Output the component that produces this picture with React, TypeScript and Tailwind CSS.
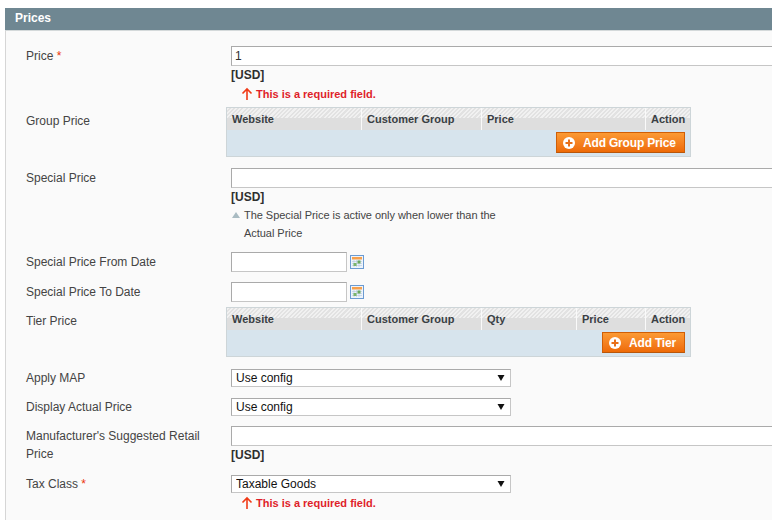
function RequiredError() {
  return (
    <div className="flex h-5 items-center pl-[10px] text-[11px] font-bold text-[#df1f2a]">
      <svg width="12" height="14" viewBox="0 0 12 14" className="mr-[3px]">
        <path d="M6 13V2M1.5 6.5 6 2l4.5 4.5" fill="none" stroke="#f03a17" strokeWidth="1.6" />
      </svg>
      This is a required field.
    </div>
  );
}

function Usd() {
  return <div className="h-[18px] text-[12px] leading-[18px] font-bold text-[#2f2f2f]">[USD]</div>;
}

function CalendarIcon() {
  return (
    <svg width="14" height="14" viewBox="0 0 14 14" className="ml-[3px]">
      <rect x="0.5" y="0.5" width="13" height="13" fill="#eef4fb" stroke="#6b9bd2" />
      <rect x="2" y="2" width="10" height="2.5" fill="#f6a04d" />
      <path d="M2 6.5h10M2 8.5h10M2 10.5h10M4 5v7M6.5 5v7M9 5v7" stroke="#b5c8de" strokeWidth="0.6" />
      <rect x="3.5" y="8" width="3" height="3" fill="#7cb56a" />
      <rect x="7.5" y="5.5" width="3" height="3" fill="#6aa85c" />
    </svg>
  );
}

function PlusCircle() {
  return (
    <svg width="12" height="12" viewBox="0 0 12 12" className="shrink-0">
      <circle cx="6" cy="6" r="6" fill="#fff" />
      <path d="M6 2.5v7M2.5 6h7" stroke="#e8701a" strokeWidth="2" />
    </svg>
  );
}

function TextInput({ value, className }: { value?: string; className: string }) {
  return (
    <input
      readOnly
      value={value ?? ""}
      className={`block h-5 border border-[#aaa] border-b-[#c6c6c6] border-r-[#c6c6c6] bg-white px-[3px] text-[12px] text-[#2f2f2f] outline-none ${className}`}
    />
  );
}

function SelectBox({ value }: { value: string }) {
  return (
    <div className="relative h-[18px] w-[280px]">
      <select className="block h-[18px] w-full appearance-none border border-[#aaa] border-b-[#c6c6c6] border-r-[#c6c6c6] bg-white pl-1 text-[12px] leading-[16px] text-[#111] outline-none">
        <option>{value}</option>
      </select>
      <svg width="8" height="6" viewBox="0 0 8 6" className="pointer-events-none absolute right-[6px] top-[6px]">
        <path d="M0.5 0h7L4 6z" fill="#111" />
      </svg>
    </div>
  );
}

function Label({
  children,
  required,
  compact,
}: {
  children: React.ReactNode;
  required?: boolean;
  compact?: boolean;
}) {
  return (
    <div className={`pr-5 text-[12px] leading-[18px] text-[#444] ${compact ? "" : "pt-px"}`}>
      {children}
      {required && <span className="text-[#eb340a]"> *</span>}
    </div>
  );
}

function PriceTable({
  columns,
  widths,
  button,
  buttonClass,
}: {
  columns: string[];
  widths: string;
  button: string;
  buttonClass: string;
}) {
  return (
    <div className="ml-[-5px] h-[50px] w-[465px] border border-[#cdd5d8] bg-[#d7e4ed]">
      <div className={`grid h-[22px] border-b border-[#aeb6b9] ${widths}`}>
        {columns.map((col) => (
          <div
            key={col}
            className="border-r border-[#fafafa] bg-[#dedede] bg-[repeating-linear-gradient(135deg,#f1f1f1_0px,#f1f1f1_1.5px,#e2e2e2_1.5px,#e2e2e2_3px)] bg-[length:100%_10px] bg-no-repeat pl-[5px] text-[11px] leading-[22px] font-bold text-[#3a3f44] last:border-r-0"
          >
            {col}
          </div>
        ))}
      </div>
      <div className="flex justify-end pt-[2px] pr-[5px]">
        <button
          className={`flex h-[21px] items-center border border-[#cf5f08] border-b-[#b9560a] bg-gradient-to-b from-[#fb9a34] to-[#ee6a05] pl-[6px] text-[12px] font-bold tracking-[-0.18px] text-white ${buttonClass}`}
        >
          <PlusCircle />
          <span className="ml-[8px]">{button}</span>
        </button>
      </div>
    </div>
  );
}

export default function App() {
  return (
    <div className="h-[520px] w-[772px] overflow-hidden bg-white pt-2 pl-[5px] font-['Liberation_Sans',Arial,sans-serif]">
      <div className="h-[23px] border-b border-[#d4d9da] bg-[#6f8792] pl-[10px] text-[12px] leading-[21px] font-bold text-white">
        Prices
      </div>
      <div className="h-[489px] border-l border-[#d6d6d6] bg-[#fafafa] pt-[15px] pl-5">
        <div className="grid grid-cols-[205px_1fr]">
          <Label required>Price</Label>
          <div>
            <TextInput value="1" className="w-[560px]" />
            <Usd />
            <RequiredError />
          </div>
        </div>

        <div className="mt-[3px] grid grid-cols-[205px_1fr]">
          <div className="pt-[4px]">
            <Label>Group Price</Label>
          </div>
          <PriceTable
            columns={["Website", "Customer Group", "Price", "Action"]}
            widths="grid-cols-[135px_120px_164px_44px]"
            button="Add Group Price"
            buttonClass="w-[129px]"
          />
        </div>

        <div className="mt-[11px] grid grid-cols-[205px_1fr]">
          <Label>Special Price</Label>
          <div>
            <TextInput className="w-[560px]" />
            <Usd />
            <div className="relative w-[280px] pl-[13px] text-[11px] leading-[18px] tracking-[-0.04px] text-[#444]">
              <svg width="8" height="6" viewBox="0 0 8 6" className="absolute left-px top-[6px]">
                <path d="M4 0l4 6H0z" fill="#a9bbc2" />
              </svg>
              The Special Price is active only when lower than the Actual Price
            </div>
          </div>
        </div>

        <div className="mt-[10px] grid grid-cols-[205px_1fr]">
          <Label>Special Price From Date</Label>
          <div className="flex items-center">
            <TextInput className="w-[116px]" />
            <CalendarIcon />
          </div>
        </div>

        <div className="mt-[10px] grid grid-cols-[205px_1fr]">
          <Label>Special Price To Date</Label>
          <div className="flex items-center">
            <TextInput className="w-[116px]" />
            <CalendarIcon />
          </div>
        </div>

        <div className="mt-[5px] grid grid-cols-[205px_1fr]">
          <div className="pt-[4px]">
            <Label>Tier Price</Label>
          </div>
          <PriceTable
            columns={["Website", "Customer Group", "Qty", "Price", "Action"]}
            widths="grid-cols-[135px_120px_95px_69px_44px]"
            button="Add Tier"
            buttonClass="w-[83px]"
          />
        </div>

        <div className="mt-3 grid grid-cols-[205px_1fr]">
          <Label compact>Apply MAP</Label>
          <SelectBox value="Use config" />
        </div>

        <div className="mt-[11px] grid grid-cols-[205px_1fr]">
          <Label compact>Display Actual Price</Label>
          <SelectBox value="Use config" />
        </div>

        <div className="mt-[10px] grid grid-cols-[205px_1fr]">
          <Label>Manufacturer's Suggested Retail Price</Label>
          <div>
            <TextInput className="w-[560px]" />
            <Usd />
          </div>
        </div>

        <div className="mt-[11px] grid grid-cols-[205px_1fr]">
          <Label required compact>
            Tax Class
          </Label>
          <div>
            <SelectBox value="Taxable Goods" />
            <RequiredError />
          </div>
        </div>
      </div>
    </div>
  );
}
